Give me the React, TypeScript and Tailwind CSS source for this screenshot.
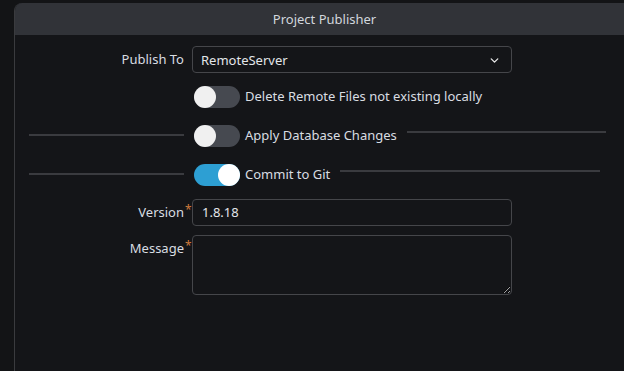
import { ChevronDown } from 'lucide-react';

function Toggle({ on }: { on?: boolean }) {
  return (
    <div
      className={`flex h-[22px] w-[46px] shrink-0 items-center rounded-full ${
        on ? 'justify-end bg-[#2d9fd3]' : 'justify-start bg-[#464950]'
      }`}
    >
      <div className={`h-[22px] w-[22px] rounded-full ${on ? 'bg-white' : 'bg-[#f0f0f0]'}`} />
    </div>
  );
}

function DividerToggle({ label, on, rightEnd }: { label: string; on?: boolean; rightEnd: string }) {
  return (
    <div className="flex h-[22px] items-center">
      <div className="ml-[14px] h-[2px] w-[155px] translate-y-[-1px] bg-[#3a3b3f]" />
      <div className="ml-[10px] flex items-center gap-[5px]">
        <Toggle on={on} />
        <span className="text-[13px] text-[#d9dde2]">{label}</span>
      </div>
      <div className={`ml-[10px] h-[2px] translate-y-[-4px] bg-[#3a3b3f] ${rightEnd}`} />
    </div>
  );
}

function Label({ children, required }: { children: string; required?: boolean }) {
  return (
    <div className="w-[169px] shrink-0 text-right text-[13px] text-[#d9dde2]">
      <span className="relative">
        {children}
        {required && (
          <span className="absolute left-full top-[-2px] ml-[1px] text-[12px] text-[#d07a3c]">*</span>
        )}
      </span>
    </div>
  );
}

export default function App() {
  return (
    <div
      className="h-[371px] w-[624px] overflow-hidden bg-[#131416] pl-[14px] pt-[3px]"
      style={{ fontFamily: '"Noto Sans", "Open Sans", sans-serif' }}
    >
      <div className="flex h-[368px] w-[620px] flex-col overflow-hidden rounded-tl-[8px] border-l border-[#3a3b3e] bg-[#141518]">
        <header className="flex h-[32px] shrink-0 items-center justify-center bg-[#313338] pt-[1px] text-[13px] text-[#d2d7dd]">
          Project Publisher
        </header>
        <main className="flex flex-col pt-[11px]">
          <div className="flex items-center">
            <div className="w-[169px] text-right text-[13px] text-[#d9dde2]">Publish To</div>
            <div className="ml-[8px] flex h-[27px] w-[320px] items-center justify-between rounded-[4px] border border-[#45464a] bg-[#141518] pl-[8px] pr-[10px] pt-[2px] text-[13px] text-[#e3e6ea]">
              <span>RemoteServer</span>
              <ChevronDown size={13} strokeWidth={2.5} className="text-[#e6e6e6]" />
            </div>
          </div>

          <div className="mt-[13px] flex items-center pl-[179px]">
            <Toggle />
            <span className="ml-[5px] text-[13px] text-[#d9dde2]">Delete Remote Files not existing locally</span>
          </div>

          <div className="mt-[17px]">
            <DividerToggle label="Apply Database Changes" rightEnd="w-[199px]" />
          </div>
          <div className="mt-[17px]">
            <DividerToggle label="Commit to Git" on rightEnd="w-[260px]" />
          </div>

          <div className="mt-[13px] flex items-center">
            <Label required>Version</Label>
            <div className="ml-[8px] flex h-[27px] w-[320px] items-center rounded-[4px] border border-[#45464a] bg-[#141518] pl-[9px] text-[13px] text-[#e3e6ea]">
              1.8.18
            </div>
          </div>

          <div className="mt-[9px] flex items-start">
            <div className="pt-[4px]">
              <Label required>Message</Label>
            </div>
            <textarea
              className="ml-[8px] h-[60px] w-[320px] rounded-[4px] border border-[#45464a] bg-[#141518] text-[13px] text-[#e3e6ea] outline-none"
              defaultValue=""
            />
          </div>
        </main>
      </div>
    </div>
  );
}
